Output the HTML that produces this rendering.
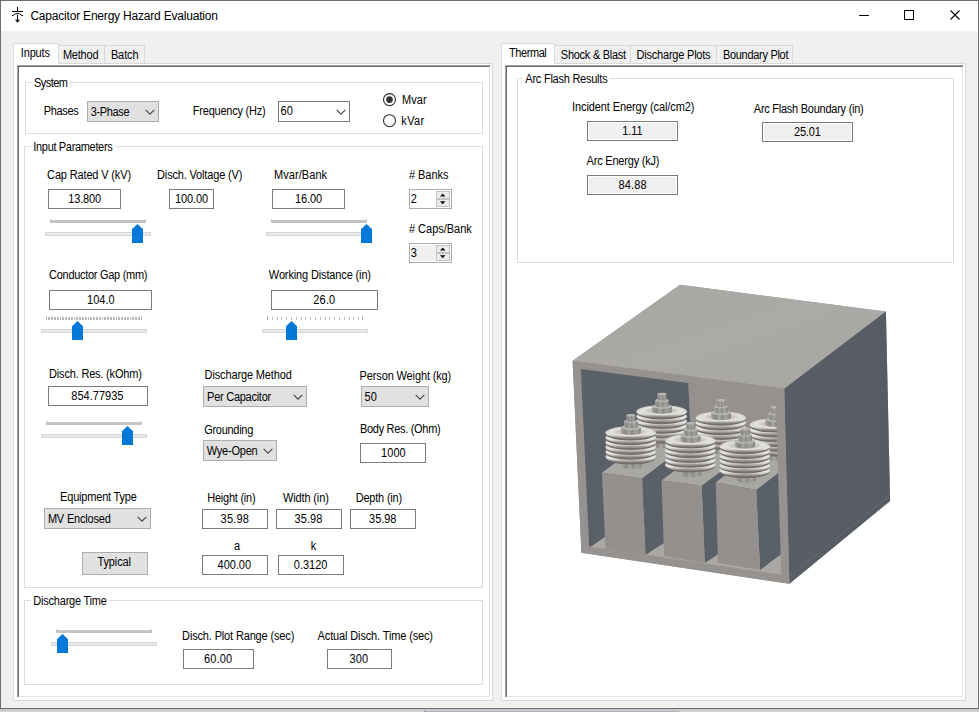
<!DOCTYPE html>
<html lang="en"><head><meta charset="utf-8"><title>Capacitor Energy Hazard Evaluation</title>
<style>
html,body{margin:0;padding:0;}
body{width:979px;height:712px;overflow:hidden;background:#f0f0f0;position:relative;font:11px/14px "Liberation Sans", Arial, sans-serif;color:#000;}
.abs{position:absolute;display:block}
.t{position:absolute;white-space:pre;height:14px;transform:scaleY(1.15);transform-origin:0 10.81px;}
#win{position:absolute;left:0;top:0;width:977px;height:707px;border:1px solid #6e6e6e;border-right-color:#707070;background:#f0f0f0;}
#title{position:absolute;left:1px;top:1px;width:977px;height:30px;background:#fff;}
#ttext{position:absolute;left:30.4px;top:8.1px;font:12px/16px "Liberation Sans", Arial, sans-serif;letter-spacing:-0.2px;white-space:pre;}
#below{position:absolute;left:0;top:709px;width:979px;height:3px;background:linear-gradient(#c2c2c2,#d4d4d4);}
#below2{position:absolute;left:424px;top:711px;width:255px;height:1px;background:#a7b3c1;border-left:1px solid #808b97;box-sizing:border-box}
.tabc{position:absolute;background:#fff;border:1px solid #d9d9d9;box-sizing:border-box}
.page{position:absolute;box-sizing:border-box;background:#fff;border-style:solid;border-width:1px;border-color:#a0a0a0 #fff #fff #a0a0a0;}
.page>i{position:absolute;left:0;top:0;right:0;bottom:0;border-style:solid;border-width:1px;border-color:#696969 #e3e3e3 #e3e3e3 #696969;display:block}
.tab{position:absolute;box-sizing:border-box;border:1px solid #d9d9d9;border-bottom:none;background:#f0f0f0;}
.tab.sel{background:#fff;}
.gb{position:absolute;border:1px solid #dcdcdc;}
.gcap{position:absolute;background:#fff;}
.tb{position:absolute;box-sizing:border-box;border:1px solid #7a7a7a;background:#fff;}
.tb.ro{background:#f0f0f0;box-shadow:inset 0 0 0 1px #fff;}
.tb.nud{border-color:#ababab;}
.tb.nud.dis{background:#f0f0f0;box-shadow:inset 0 0 0 1px #fff;}
.cb{position:absolute;box-sizing:border-box;border:1px solid #adadad;background:#e1e1e1;}
.cbw{position:absolute;box-sizing:border-box;border:1px solid #7a7a7a;background:#fff;}
.btn{position:absolute;box-sizing:border-box;border:1px solid #adadad;background:#e1e1e1;}
.spin{position:absolute;border:1px solid #c3c3c3;background:#ececec;}
.track{position:absolute;border:1px solid #d6d6d6;background:#e7eaea;}
</style></head><body>
<div id="win"></div>
<div id="title"></div>
<svg class="abs" style="left:10px;top:5px" width="16" height="20" viewBox="0 0 16 20"><g fill="none" stroke="#000" stroke-width="1"><path d="M7.5 2 V6.5 M2 6.5 H13 M2 10.5 H3.5 M3.5 10 Q7.5 6.8 11.5 10 M11.5 10.5 H13 M7.5 9.6 V16"/></g><path d="M5 14.8 H10 L7.5 17.8 Z" fill="#000"/></svg>
<div id="ttext">Capacitor Energy Hazard Evaluation</div>
<svg class="abs" style="left:855px;top:5px" width="110" height="20" viewBox="0 0 110 20"><g fill="none" stroke="#000" stroke-width="1"><path d="M4 10.5 H14"/><rect x="49.5" y="5.5" width="9" height="9"/><path d="M95.5 5.5 L104.5 14.5 M104.5 5.5 L95.5 14.5" stroke-width="1.1"/></g></svg>
<div id="below"></div><div id="below2"></div>

<!-- left tab control -->
<div class="tabc" style="left:13px;top:63px;width:480px;height:638px"></div>
<div class="tab" style="left:57px;top:45px;width:48px;height:18px"></div>
<div class="tab" style="left:104px;top:45px;width:41px;height:18px"></div>
<div class="tab sel" style="left:13px;top:43px;width:46px;height:21px"></div>
<div class="page" style="left:17px;top:65px;width:474px;height:633px"><i></i></div>
<!-- right tab control -->
<div class="tabc" style="left:501px;top:63px;width:465px;height:638px"></div>
<div class="tab" style="left:551px;top:45px;width:80px;height:18px"></div>
<div class="tab" style="left:630px;top:45px;width:87px;height:18px"></div>
<div class="tab" style="left:716px;top:45px;width:77px;height:18px"></div>
<div class="tab sel" style="left:501px;top:43px;width:54px;height:21px"></div>
<div class="page" style="left:505px;top:65px;width:459px;height:633px"><i></i></div>

<div class="gb" style="left:25px;top:82px;width:456px;height:50px"></div>
<div class="gcap" style="left:32.00px;top:80px;width:37.50px;height:5px"></div>
<div class="t" style="left:34.10px;top:75.99px;letter-spacing:-0.565px;">System</div>
<div class="gb" style="left:24px;top:146px;width:457px;height:440px"></div>
<div class="gcap" style="left:31.25px;top:144px;width:83.25px;height:5px"></div>
<div class="t" style="left:33.35px;top:139.99px;letter-spacing:-0.333px;">Input Parameters</div>
<div class="gb" style="left:24px;top:600px;width:457px;height:83px"></div>
<div class="gcap" style="left:31.25px;top:598px;width:77.50px;height:5px"></div>
<div class="t" style="left:33.35px;top:593.99px;letter-spacing:-0.223px;">Discharge Time</div>
<div class="gb" style="left:517px;top:78px;width:435px;height:183px"></div>
<div class="gcap" style="left:523.25px;top:76px;width:86.25px;height:5px"></div>
<div class="t" style="left:525.35px;top:71.99px;letter-spacing:-0.244px;">Arc Flash Results</div>
<div class="tb" style="left:48px;top:189px;width:73px;height:20px"></div>
<div class="tb" style="left:169px;top:189px;width:45px;height:20px"></div>
<div class="tb" style="left:272px;top:189px;width:73px;height:20px"></div>
<div class="tb" style="left:49px;top:290px;width:103px;height:20px"></div>
<div class="tb" style="left:271px;top:290px;width:107px;height:20px"></div>
<div class="tb" style="left:48px;top:386px;width:100px;height:20px"></div>
<div class="tb" style="left:360px;top:443px;width:66px;height:20px"></div>
<div class="tb" style="left:202px;top:509px;width:66px;height:20px"></div>
<div class="tb" style="left:276px;top:509px;width:66px;height:20px"></div>
<div class="tb" style="left:350px;top:509px;width:66px;height:20px"></div>
<div class="tb" style="left:202px;top:555px;width:66px;height:20px"></div>
<div class="tb" style="left:278px;top:555px;width:66px;height:20px"></div>
<div class="tb" style="left:183px;top:649px;width:71px;height:20px"></div>
<div class="tb" style="left:327px;top:649px;width:65px;height:20px"></div>
<div class="tb ro" style="left:587px;top:121px;width:91px;height:20px"></div>
<div class="tb ro" style="left:762px;top:122px;width:91px;height:20px"></div>
<div class="tb ro" style="left:587px;top:175px;width:91px;height:20px"></div>
<div class="cb" style="left:87px;top:101px;width:72px;height:21px"></div>
<svg class="abs" style="left:143.5px;top:108.0px" width="12" height="8" viewBox="0 0 12 8"><path d="M1.7 1.9 L6 6.2 L10.3 1.9" fill="none" stroke="#424242" stroke-width="1.1"/></svg>
<div class="cb" style="left:203px;top:386px;width:104px;height:21px"></div>
<svg class="abs" style="left:291.5px;top:393.0px" width="12" height="8" viewBox="0 0 12 8"><path d="M1.7 1.9 L6 6.2 L10.3 1.9" fill="none" stroke="#424242" stroke-width="1.1"/></svg>
<div class="cb" style="left:361px;top:386px;width:68px;height:21px"></div>
<svg class="abs" style="left:413.5px;top:393.0px" width="12" height="8" viewBox="0 0 12 8"><path d="M1.7 1.9 L6 6.2 L10.3 1.9" fill="none" stroke="#424242" stroke-width="1.1"/></svg>
<div class="cb" style="left:203px;top:440px;width:74px;height:21px"></div>
<svg class="abs" style="left:261.5px;top:447.0px" width="12" height="8" viewBox="0 0 12 8"><path d="M1.7 1.9 L6 6.2 L10.3 1.9" fill="none" stroke="#424242" stroke-width="1.1"/></svg>
<div class="cb" style="left:44px;top:508px;width:107px;height:21px"></div>
<svg class="abs" style="left:135.5px;top:515.0px" width="12" height="8" viewBox="0 0 12 8"><path d="M1.7 1.9 L6 6.2 L10.3 1.9" fill="none" stroke="#424242" stroke-width="1.1"/></svg>
<div class="cbw" style="left:278px;top:101px;width:72px;height:21px"></div>
<svg class="abs" style="left:334.5px;top:108px" width="12" height="8" viewBox="0 0 12 8"><path d="M1.7 1.9 L6 6.2 L10.3 1.9" fill="none" stroke="#424242" stroke-width="1.1"/></svg>
<div class="btn" style="left:82px;top:552px;width:66px;height:23px"></div>
<div class="tb nud" style="left:409px;top:189px;width:43px;height:20px"></div><div class="spin" style="left:436px;top:191px;width:12px;height:6px"></div><div class="spin" style="left:436px;top:199px;width:12px;height:6px"></div><svg class="abs" style="left:436px;top:191px" width="14" height="17" viewBox="0 0 14 17"><path d="M4 5.6 L6.7 2.6 L9.4 5.6 Z M4 10.3 L6.7 13.3 L9.4 10.3 Z" fill="#000"/></svg>
<div class="tb nud dis" style="left:409px;top:243px;width:43px;height:20px"></div><div class="spin" style="left:436px;top:245px;width:12px;height:6px"></div><div class="spin" style="left:436px;top:253px;width:12px;height:6px"></div><svg class="abs" style="left:436px;top:245px" width="14" height="17" viewBox="0 0 14 17"><path d="M4 5.6 L6.7 2.6 L9.4 5.6 Z M4 10.3 L6.7 13.3 L9.4 10.3 Z" fill="#000"/></svg>
<!-- radios -->
<svg class="abs" style="left:382px;top:92px" width="15" height="37" viewBox="0 0 15 37"><circle cx="7.5" cy="7.55" r="6" fill="#fff" stroke="#333" stroke-width="1.15"/><circle cx="7.5" cy="7.55" r="3.35" fill="#333"/><circle cx="7.5" cy="28.7" r="6" fill="#fff" stroke="#333" stroke-width="1.15"/></svg>
<div class="abs" style="left:50px;top:220px;width:96px;height:3px;background:#c4c4c4"></div><div class="abs" style="left:50px;top:219px;width:1px;height:1px;background:#c4c4c4"></div><div class="abs" style="left:145px;top:219px;width:1px;height:1px;background:#c4c4c4"></div><div class="track" style="left:45px;top:232px;width:104px;height:2px"></div><svg class="abs" style="left:132px;top:224px" width="11" height="19" viewBox="0 0 11 19"><path d="M5.5 0 L11 5.2 L11 19 L0 19 L0 5.2 Z" fill="#0078d7"/></svg>
<div class="abs" style="left:271px;top:220px;width:96px;height:3px;background:#c4c4c4"></div><div class="abs" style="left:271px;top:219px;width:1px;height:1px;background:#c4c4c4"></div><div class="abs" style="left:366px;top:219px;width:1px;height:1px;background:#c4c4c4"></div><div class="track" style="left:266px;top:232px;width:104px;height:2px"></div><svg class="abs" style="left:361px;top:224px" width="11" height="19" viewBox="0 0 11 19"><path d="M5.5 0 L11 5.2 L11 19 L0 19 L0 5.2 Z" fill="#0078d7"/></svg>
<svg class="abs" style="left:46px;top:316px" width="99" height="4" shape-rendering="crispEdges"><rect x="0" y="0" width="1" height="4" fill="#b2b2b2"/><rect x="2" y="1" width="2" height="3" fill="#b9b9b9"/><rect x="5" y="1" width="2" height="3" fill="#b9b9b9"/><rect x="8" y="1" width="2" height="3" fill="#b9b9b9"/><rect x="11" y="1" width="2" height="3" fill="#b9b9b9"/><rect x="14" y="1" width="1" height="3" fill="#b9b9b9"/><rect x="16" y="1" width="2" height="3" fill="#b9b9b9"/><rect x="19" y="1" width="2" height="3" fill="#b9b9b9"/><rect x="22" y="1" width="2" height="3" fill="#b9b9b9"/><rect x="25" y="1" width="2" height="3" fill="#b9b9b9"/><rect x="28" y="1" width="1" height="3" fill="#b9b9b9"/><rect x="30" y="1" width="2" height="3" fill="#b9b9b9"/><rect x="33" y="1" width="2" height="3" fill="#b9b9b9"/><rect x="36" y="1" width="2" height="3" fill="#b9b9b9"/><rect x="39" y="1" width="2" height="3" fill="#b9b9b9"/><rect x="42" y="1" width="1" height="3" fill="#b9b9b9"/><rect x="44" y="1" width="2" height="3" fill="#b9b9b9"/><rect x="47" y="1" width="2" height="3" fill="#b9b9b9"/><rect x="50" y="1" width="2" height="3" fill="#b9b9b9"/><rect x="53" y="1" width="2" height="3" fill="#b9b9b9"/><rect x="56" y="1" width="1" height="3" fill="#b9b9b9"/><rect x="58" y="1" width="2" height="3" fill="#b9b9b9"/><rect x="61" y="1" width="2" height="3" fill="#b9b9b9"/><rect x="64" y="1" width="2" height="3" fill="#b9b9b9"/><rect x="67" y="1" width="2" height="3" fill="#b9b9b9"/><rect x="70" y="1" width="1" height="3" fill="#b9b9b9"/><rect x="72" y="1" width="2" height="3" fill="#b9b9b9"/><rect x="75" y="1" width="2" height="3" fill="#b9b9b9"/><rect x="78" y="1" width="2" height="3" fill="#b9b9b9"/><rect x="81" y="1" width="2" height="3" fill="#b9b9b9"/><rect x="84" y="1" width="1" height="3" fill="#b9b9b9"/><rect x="86" y="1" width="2" height="3" fill="#b9b9b9"/><rect x="89" y="1" width="2" height="3" fill="#b9b9b9"/><rect x="92" y="1" width="2" height="3" fill="#b9b9b9"/><rect x="95" y="0" width="1" height="4" fill="#b2b2b2"/></svg><div class="track" style="left:41px;top:329px;width:104px;height:2px"></div><svg class="abs" style="left:72px;top:321px" width="11" height="19" viewBox="0 0 11 19"><path d="M5.5 0 L11 5.2 L11 19 L0 19 L0 5.2 Z" fill="#0078d7"/></svg>
<svg class="abs" style="left:267px;top:316px" width="98" height="4" shape-rendering="crispEdges"><rect x="0" y="0" width="1" height="4" fill="#b2b2b2"/><rect x="5" y="1" width="1" height="3" fill="#b9b9b9"/><rect x="10" y="1" width="1" height="3" fill="#b9b9b9"/><rect x="14" y="1" width="1" height="3" fill="#b9b9b9"/><rect x="19" y="1" width="1" height="3" fill="#b9b9b9"/><rect x="24" y="1" width="1" height="3" fill="#b9b9b9"/><rect x="29" y="1" width="1" height="3" fill="#b9b9b9"/><rect x="34" y="1" width="1" height="3" fill="#b9b9b9"/><rect x="38" y="1" width="1" height="3" fill="#b9b9b9"/><rect x="43" y="1" width="1" height="3" fill="#b9b9b9"/><rect x="48" y="1" width="1" height="3" fill="#b9b9b9"/><rect x="53" y="1" width="1" height="3" fill="#b9b9b9"/><rect x="58" y="1" width="1" height="3" fill="#b9b9b9"/><rect x="62" y="1" width="1" height="3" fill="#b9b9b9"/><rect x="67" y="1" width="1" height="3" fill="#b9b9b9"/><rect x="72" y="1" width="1" height="3" fill="#b9b9b9"/><rect x="77" y="1" width="1" height="3" fill="#b9b9b9"/><rect x="82" y="1" width="1" height="3" fill="#b9b9b9"/><rect x="86" y="1" width="1" height="3" fill="#b9b9b9"/><rect x="91" y="1" width="1" height="3" fill="#b9b9b9"/><rect x="95" y="0" width="1" height="4" fill="#b2b2b2"/></svg><div class="track" style="left:262px;top:329px;width:104px;height:2px"></div><svg class="abs" style="left:286px;top:321px" width="11" height="19" viewBox="0 0 11 19"><path d="M5.5 0 L11 5.2 L11 19 L0 19 L0 5.2 Z" fill="#0078d7"/></svg>
<div class="abs" style="left:46px;top:422px;width:96px;height:3px;background:#c4c4c4"></div><div class="abs" style="left:46px;top:421px;width:1px;height:1px;background:#c4c4c4"></div><div class="abs" style="left:141px;top:421px;width:1px;height:1px;background:#c4c4c4"></div><div class="track" style="left:41px;top:434px;width:104px;height:2px"></div><svg class="abs" style="left:122px;top:426px" width="11" height="19" viewBox="0 0 11 19"><path d="M5.5 0 L11 5.2 L11 19 L0 19 L0 5.2 Z" fill="#0078d7"/></svg>
<div class="abs" style="left:56px;top:630px;width:96px;height:3px;background:#c4c4c4"></div><div class="abs" style="left:56px;top:629px;width:1px;height:1px;background:#c4c4c4"></div><div class="abs" style="left:151px;top:629px;width:1px;height:1px;background:#c4c4c4"></div><div class="track" style="left:51px;top:642px;width:104px;height:2px"></div><svg class="abs" style="left:57px;top:634px" width="11" height="19" viewBox="0 0 11 19"><path d="M5.5 0 L11 5.2 L11 19 L0 19 L0 5.2 Z" fill="#0078d7"/></svg>
<svg class="abs" style="left:560px;top:275px" width="340" height="320" viewBox="560 275 340 320">
<defs>
<linearGradient id="gd" x1="0" y1="0" x2="0" y2="1"><stop offset="0" stop-color="#cbc9c6"/><stop offset="0.42" stop-color="#cecccc"/><stop offset="0.6" stop-color="#e9e8e6"/><stop offset="0.74" stop-color="#d0cecb"/><stop offset="0.86" stop-color="#a19e9b"/><stop offset="1" stop-color="#7b7875"/></linearGradient>
<linearGradient id="gc" x1="0" y1="0" x2="1" y2="0"><stop offset="0" stop-color="#a3a19e"/><stop offset="0.22" stop-color="#8a8885"/><stop offset="0.4" stop-color="#a9a7a4"/><stop offset="0.55" stop-color="#8d8b88"/><stop offset="0.75" stop-color="#a5a3a0"/><stop offset="1" stop-color="#858380"/></linearGradient>
<radialGradient id="gt" cx="0.5" cy="0.5" r="0.5"><stop offset="0" stop-color="#b5b3b0"/><stop offset="0.5" stop-color="#c6c4c1"/><stop offset="0.85" stop-color="#e5e4e1"/><stop offset="1" stop-color="#d6d4d1"/></radialGradient>
<linearGradient id="gtop" x1="0" y1="0" x2="1" y2="1"><stop offset="0" stop-color="#a8a6a2"/><stop offset="0.5" stop-color="#abaaa6"/><stop offset="1" stop-color="#a7a5a1"/></linearGradient>
<linearGradient id="gright" x1="0" y1="0" x2="1" y2="0"><stop offset="0" stop-color="#595e66"/><stop offset="1" stop-color="#575c64"/></linearGradient>
<clipPath id="hole"><polygon points="577.5,365.5 779,392 785,579 586,550.5"/></clipPath>
</defs>
<polygon points="572.6,360.7 680.1,284.8 885.9,311.6 890.1,500.9 789.4,583.8 581.4,552.8" fill="#96928f"/>
<polygon points="572.6,360.7 680.1,284.8 885.9,311.6 784.2,388.7" fill="url(#gtop)"/>
<polygon points="784.2,388.7 885.9,311.6 890.1,500.9 789.4,583.8" fill="url(#gright)"/>
<path d="M790.6 575.6 L889.4 495.3" stroke="#6d737a" stroke-width="0.6" fill="none"/>
<g clip-path="url(#hole)">
<polygon points="572.6,360.7 784.2,388.7 789.4,583.8 581.4,552.8" fill="#aaa8a4"/>
<polygon points="688.2,380.5 778.0,392.5 783.0,500.0 692.5,476.0" fill="#96918e"/>
<polygon points="578.5,366.5 688.2,380.5 692.5,476.0 587.5,549.0" fill="#5a6067"/>
<polygon points="602.0,472.8 642.3,478.5 694.3,439.5 654.0,433.8" fill="#a9a7a3"/><polygon points="642.3,478.5 694.3,439.5 697.4,521.3 645.4,555.0" fill="#5a6067"/><polygon points="602.0,472.8 642.3,478.5 645.4,555.0 605.5,548.8" fill="#94908d"/>
<path d="M653.0 439.2 L653.0 445.5 A9.9 2.4 0 0 0 672.8 445.5 L672.8 439.2 Z" fill="url(#gc)"/><ellipse cx="662.9" cy="439.2" rx="9.9" ry="2.4" fill="#b9b7b4"/><ellipse cx="661.7" cy="437.1" rx="24.7" ry="6.3" fill="#716e6b"/><ellipse cx="661.7" cy="435.5" rx="25.3" ry="6.3" fill="url(#gd)"/><ellipse cx="661.7" cy="432.3" rx="24.7" ry="6.3" fill="#716e6b"/><ellipse cx="661.7" cy="430.7" rx="25.3" ry="6.3" fill="url(#gd)"/><ellipse cx="661.7" cy="427.5" rx="24.7" ry="6.3" fill="#716e6b"/><ellipse cx="661.7" cy="425.9" rx="25.3" ry="6.3" fill="url(#gd)"/><ellipse cx="661.7" cy="422.7" rx="24.7" ry="6.3" fill="#716e6b"/><ellipse cx="661.7" cy="421.1" rx="25.3" ry="6.3" fill="url(#gd)"/><ellipse cx="661.7" cy="417.9" rx="24.7" ry="6.3" fill="#716e6b"/><ellipse cx="661.7" cy="416.3" rx="25.3" ry="6.3" fill="url(#gd)"/><ellipse cx="661.7" cy="413.1" rx="24.7" ry="6.3" fill="#716e6b"/><ellipse cx="661.7" cy="411.5" rx="25.3" ry="6.3" fill="url(#gd)"/><ellipse cx="661.7" cy="410.6" rx="23.1" ry="4.7" fill="url(#gt)"/><path d="M652.1 406.4 L652.1 411.4 A9.9 2.4 0 0 0 671.9 411.4 L671.9 406.4 Z" fill="url(#gc)"/><ellipse cx="662.0" cy="406.4" rx="9.9" ry="2.4" fill="#b9b7b4"/><path d="M655.1 400.2 L655.1 405.4 A6.9 1.8 0 0 0 668.9 405.4 L668.9 400.2 Z" fill="url(#gc)"/><ellipse cx="662.0" cy="400.2" rx="6.9" ry="1.8" fill="#b9b7b4"/><path d="M657.5 394.0 L657.5 399.6 A4.5 1.2 0 0 0 666.5 399.6 L666.5 394.0 Z" fill="url(#gc)"/><ellipse cx="662.0" cy="394.0" rx="4.5" ry="1.2" fill="#b9b7b4"/>
<path d="M622.0 460.3 L622.0 466.6 A9.9 2.4 0 0 0 641.8 466.6 L641.8 460.3 Z" fill="url(#gc)"/><ellipse cx="631.9" cy="460.3" rx="9.9" ry="2.4" fill="#b9b7b4"/><ellipse cx="630.7" cy="458.2" rx="24.7" ry="6.3" fill="#716e6b"/><ellipse cx="630.7" cy="456.6" rx="25.3" ry="6.3" fill="url(#gd)"/><ellipse cx="630.7" cy="453.4" rx="24.7" ry="6.3" fill="#716e6b"/><ellipse cx="630.7" cy="451.8" rx="25.3" ry="6.3" fill="url(#gd)"/><ellipse cx="630.7" cy="448.6" rx="24.7" ry="6.3" fill="#716e6b"/><ellipse cx="630.7" cy="447.0" rx="25.3" ry="6.3" fill="url(#gd)"/><ellipse cx="630.7" cy="443.8" rx="24.7" ry="6.3" fill="#716e6b"/><ellipse cx="630.7" cy="442.2" rx="25.3" ry="6.3" fill="url(#gd)"/><ellipse cx="630.7" cy="439.0" rx="24.7" ry="6.3" fill="#716e6b"/><ellipse cx="630.7" cy="437.4" rx="25.3" ry="6.3" fill="url(#gd)"/><ellipse cx="630.7" cy="434.2" rx="24.7" ry="6.3" fill="#716e6b"/><ellipse cx="630.7" cy="432.6" rx="25.3" ry="6.3" fill="url(#gd)"/><ellipse cx="630.7" cy="431.7" rx="23.1" ry="4.7" fill="url(#gt)"/><path d="M621.1 427.5 L621.1 432.5 A9.9 2.4 0 0 0 640.9 432.5 L640.9 427.5 Z" fill="url(#gc)"/><ellipse cx="631.0" cy="427.5" rx="9.9" ry="2.4" fill="#b9b7b4"/><path d="M624.1 421.3 L624.1 426.5 A6.9 1.8 0 0 0 637.9 426.5 L637.9 421.3 Z" fill="url(#gc)"/><ellipse cx="631.0" cy="421.3" rx="6.9" ry="1.8" fill="#b9b7b4"/><path d="M626.5 415.1 L626.5 420.7 A4.5 1.2 0 0 0 635.5 420.7 L635.5 415.1 Z" fill="url(#gc)"/><ellipse cx="631.0" cy="415.1" rx="4.5" ry="1.2" fill="#b9b7b4"/>
<polygon points="661.5,480.5 701.7,485.7 753.7,446.7 713.5,441.5" fill="#a9a7a3"/><polygon points="701.7,485.7 753.7,446.7 756.8,528.5 704.8,563.0" fill="#5a6067"/><polygon points="661.5,480.5 701.7,485.7 704.8,563.0 664.1,556.3" fill="#94908d"/>
<path d="M712.1 445.5 L712.1 451.8 A9.9 2.4 0 0 0 731.9 451.8 L731.9 445.5 Z" fill="url(#gc)"/><ellipse cx="722.0" cy="445.5" rx="9.9" ry="2.4" fill="#b9b7b4"/><ellipse cx="720.8" cy="443.4" rx="24.7" ry="6.3" fill="#716e6b"/><ellipse cx="720.8" cy="441.8" rx="25.3" ry="6.3" fill="url(#gd)"/><ellipse cx="720.8" cy="438.6" rx="24.7" ry="6.3" fill="#716e6b"/><ellipse cx="720.8" cy="437.0" rx="25.3" ry="6.3" fill="url(#gd)"/><ellipse cx="720.8" cy="433.8" rx="24.7" ry="6.3" fill="#716e6b"/><ellipse cx="720.8" cy="432.2" rx="25.3" ry="6.3" fill="url(#gd)"/><ellipse cx="720.8" cy="429.0" rx="24.7" ry="6.3" fill="#716e6b"/><ellipse cx="720.8" cy="427.4" rx="25.3" ry="6.3" fill="url(#gd)"/><ellipse cx="720.8" cy="424.2" rx="24.7" ry="6.3" fill="#716e6b"/><ellipse cx="720.8" cy="422.6" rx="25.3" ry="6.3" fill="url(#gd)"/><ellipse cx="720.8" cy="419.4" rx="24.7" ry="6.3" fill="#716e6b"/><ellipse cx="720.8" cy="417.8" rx="25.3" ry="6.3" fill="url(#gd)"/><ellipse cx="720.8" cy="416.9" rx="23.1" ry="4.7" fill="url(#gt)"/><path d="M711.2 412.7 L711.2 417.7 A9.9 2.4 0 0 0 731.0 417.7 L731.0 412.7 Z" fill="url(#gc)"/><ellipse cx="721.1" cy="412.7" rx="9.9" ry="2.4" fill="#b9b7b4"/><path d="M714.2 406.5 L714.2 411.7 A6.9 1.8 0 0 0 728.0 411.7 L728.0 406.5 Z" fill="url(#gc)"/><ellipse cx="721.1" cy="406.5" rx="6.9" ry="1.8" fill="#b9b7b4"/><path d="M716.6 400.3 L716.6 405.9 A4.5 1.2 0 0 0 725.6 405.9 L725.6 400.3 Z" fill="url(#gc)"/><ellipse cx="721.1" cy="400.3" rx="4.5" ry="1.2" fill="#b9b7b4"/>
<path d="M681.6 468.4 L681.6 474.7 A9.9 2.4 0 0 0 701.4 474.7 L701.4 468.4 Z" fill="url(#gc)"/><ellipse cx="691.5" cy="468.4" rx="9.9" ry="2.4" fill="#b9b7b4"/><ellipse cx="690.3" cy="466.3" rx="24.7" ry="6.3" fill="#716e6b"/><ellipse cx="690.3" cy="464.7" rx="25.3" ry="6.3" fill="url(#gd)"/><ellipse cx="690.3" cy="461.5" rx="24.7" ry="6.3" fill="#716e6b"/><ellipse cx="690.3" cy="459.9" rx="25.3" ry="6.3" fill="url(#gd)"/><ellipse cx="690.3" cy="456.7" rx="24.7" ry="6.3" fill="#716e6b"/><ellipse cx="690.3" cy="455.1" rx="25.3" ry="6.3" fill="url(#gd)"/><ellipse cx="690.3" cy="451.9" rx="24.7" ry="6.3" fill="#716e6b"/><ellipse cx="690.3" cy="450.3" rx="25.3" ry="6.3" fill="url(#gd)"/><ellipse cx="690.3" cy="447.1" rx="24.7" ry="6.3" fill="#716e6b"/><ellipse cx="690.3" cy="445.5" rx="25.3" ry="6.3" fill="url(#gd)"/><ellipse cx="690.3" cy="442.3" rx="24.7" ry="6.3" fill="#716e6b"/><ellipse cx="690.3" cy="440.7" rx="25.3" ry="6.3" fill="url(#gd)"/><ellipse cx="690.3" cy="439.8" rx="23.1" ry="4.7" fill="url(#gt)"/><path d="M680.7 435.6 L680.7 440.6 A9.9 2.4 0 0 0 700.5 440.6 L700.5 435.6 Z" fill="url(#gc)"/><ellipse cx="690.6" cy="435.6" rx="9.9" ry="2.4" fill="#b9b7b4"/><path d="M683.7 429.4 L683.7 434.6 A6.9 1.8 0 0 0 697.5 434.6 L697.5 429.4 Z" fill="url(#gc)"/><ellipse cx="690.6" cy="429.4" rx="6.9" ry="1.8" fill="#b9b7b4"/><path d="M686.1 423.2 L686.1 428.8 A4.5 1.2 0 0 0 695.1 428.8 L695.1 423.2 Z" fill="url(#gc)"/><ellipse cx="690.6" cy="423.2" rx="4.5" ry="1.2" fill="#b9b7b4"/>
<polygon points="715.7,482.4 756.2,490.0 808.2,450.0 767.7,442.4" fill="#a9a7a3"/><polygon points="756.2,490.0 808.2,450.0 812.1,531.0 760.1,570.0" fill="#5a6067"/><polygon points="715.7,482.4 756.2,490.0 760.1,570.0 718.1,563.0" fill="#94908d"/>
<path d="M766.3 452.4 L766.3 458.7 A9.9 2.4 0 0 0 786.1 458.7 L786.1 452.4 Z" fill="url(#gc)"/><ellipse cx="776.2" cy="452.4" rx="9.9" ry="2.4" fill="#b9b7b4"/><ellipse cx="775.0" cy="450.3" rx="24.7" ry="6.3" fill="#716e6b"/><ellipse cx="775.0" cy="448.7" rx="25.3" ry="6.3" fill="url(#gd)"/><ellipse cx="775.0" cy="445.5" rx="24.7" ry="6.3" fill="#716e6b"/><ellipse cx="775.0" cy="443.9" rx="25.3" ry="6.3" fill="url(#gd)"/><ellipse cx="775.0" cy="440.7" rx="24.7" ry="6.3" fill="#716e6b"/><ellipse cx="775.0" cy="439.1" rx="25.3" ry="6.3" fill="url(#gd)"/><ellipse cx="775.0" cy="435.9" rx="24.7" ry="6.3" fill="#716e6b"/><ellipse cx="775.0" cy="434.3" rx="25.3" ry="6.3" fill="url(#gd)"/><ellipse cx="775.0" cy="431.1" rx="24.7" ry="6.3" fill="#716e6b"/><ellipse cx="775.0" cy="429.5" rx="25.3" ry="6.3" fill="url(#gd)"/><ellipse cx="775.0" cy="426.3" rx="24.7" ry="6.3" fill="#716e6b"/><ellipse cx="775.0" cy="424.7" rx="25.3" ry="6.3" fill="url(#gd)"/><ellipse cx="775.0" cy="423.8" rx="23.1" ry="4.7" fill="url(#gt)"/><path d="M765.4 419.6 L765.4 424.6 A9.9 2.4 0 0 0 785.2 424.6 L785.2 419.6 Z" fill="url(#gc)"/><ellipse cx="775.3" cy="419.6" rx="9.9" ry="2.4" fill="#b9b7b4"/><path d="M768.4 413.4 L768.4 418.6 A6.9 1.8 0 0 0 782.2 418.6 L782.2 413.4 Z" fill="url(#gc)"/><ellipse cx="775.3" cy="413.4" rx="6.9" ry="1.8" fill="#b9b7b4"/><path d="M770.8 407.2 L770.8 412.8 A4.5 1.2 0 0 0 779.8 412.8 L779.8 407.2 Z" fill="url(#gc)"/><ellipse cx="775.3" cy="407.2" rx="4.5" ry="1.2" fill="#b9b7b4"/>
<path d="M736.1 474.0 L736.1 480.3 A9.9 2.4 0 0 0 755.9 480.3 L755.9 474.0 Z" fill="url(#gc)"/><ellipse cx="746.0" cy="474.0" rx="9.9" ry="2.4" fill="#b9b7b4"/><ellipse cx="744.8" cy="471.9" rx="24.7" ry="6.3" fill="#716e6b"/><ellipse cx="744.8" cy="470.3" rx="25.3" ry="6.3" fill="url(#gd)"/><ellipse cx="744.8" cy="467.1" rx="24.7" ry="6.3" fill="#716e6b"/><ellipse cx="744.8" cy="465.5" rx="25.3" ry="6.3" fill="url(#gd)"/><ellipse cx="744.8" cy="462.3" rx="24.7" ry="6.3" fill="#716e6b"/><ellipse cx="744.8" cy="460.7" rx="25.3" ry="6.3" fill="url(#gd)"/><ellipse cx="744.8" cy="457.5" rx="24.7" ry="6.3" fill="#716e6b"/><ellipse cx="744.8" cy="455.9" rx="25.3" ry="6.3" fill="url(#gd)"/><ellipse cx="744.8" cy="452.7" rx="24.7" ry="6.3" fill="#716e6b"/><ellipse cx="744.8" cy="451.1" rx="25.3" ry="6.3" fill="url(#gd)"/><ellipse cx="744.8" cy="447.9" rx="24.7" ry="6.3" fill="#716e6b"/><ellipse cx="744.8" cy="446.3" rx="25.3" ry="6.3" fill="url(#gd)"/><ellipse cx="744.8" cy="445.4" rx="23.1" ry="4.7" fill="url(#gt)"/><path d="M735.2 441.2 L735.2 446.2 A9.9 2.4 0 0 0 755.0 446.2 L755.0 441.2 Z" fill="url(#gc)"/><ellipse cx="745.1" cy="441.2" rx="9.9" ry="2.4" fill="#b9b7b4"/><path d="M738.2 435.0 L738.2 440.2 A6.9 1.8 0 0 0 752.0 440.2 L752.0 435.0 Z" fill="url(#gc)"/><ellipse cx="745.1" cy="435.0" rx="6.9" ry="1.8" fill="#b9b7b4"/><path d="M740.6 428.8 L740.6 434.4 A4.5 1.2 0 0 0 749.6 434.4 L749.6 428.8 Z" fill="url(#gc)"/><ellipse cx="745.1" cy="428.8" rx="4.5" ry="1.2" fill="#b9b7b4"/>
</g>
<path fill-rule="evenodd" fill="#96928f" d="M572.6,360.7 L784.2,388.7 L789.4,583.8 L581.4,552.8 Z M580.8,368.9 L775.6,394.5 L781.3,574.6 L589.2,546.6 Z"/>
</svg>
<div class="t" style="left:20.80px;top:45.99px;letter-spacing:-0.161px;">Inputs</div>
<div class="t" style="left:62.90px;top:47.99px;letter-spacing:-0.201px;">Method</div>
<div class="t" style="left:110.90px;top:47.99px;letter-spacing:-0.108px;">Batch</div>
<div class="t" style="left:509.10px;top:45.99px;letter-spacing:-0.449px;">Thermal</div>
<div class="t" style="left:560.85px;top:47.99px;letter-spacing:-0.264px;">Shock &amp; Blast</div>
<div class="t" style="left:636.60px;top:47.99px;letter-spacing:-0.216px;">Discharge Plots</div>
<div class="t" style="left:722.90px;top:47.99px;letter-spacing:-0.293px;">Boundary Plot</div>
<div class="t" style="left:43.85px;top:103.99px;letter-spacing:-0.359px;">Phases</div>
<div class="t" style="left:192.85px;top:103.99px;letter-spacing:-0.232px;">Frequency (Hz)</div>
<div class="t" style="left:402.10px;top:92.99px;letter-spacing:0.024px;">Mvar</div>
<div class="t" style="left:401.30px;top:113.99px;letter-spacing:0.372px;">kVar</div>
<div class="t" style="left:47.10px;top:167.99px;letter-spacing:-0.150px;">Cap Rated V (kV)</div>
<div class="t" style="left:157.10px;top:167.99px;letter-spacing:-0.166px;">Disch. Voltage (V)</div>
<div class="t" style="left:274.10px;top:167.99px;letter-spacing:0.052px;">Mvar/Bank</div>
<div class="t" style="left:409.00px;top:167.99px;letter-spacing:-0.050px;"># Banks</div>
<div class="t" style="left:409.00px;top:221.99px;letter-spacing:-0.026px;"># Caps/Bank</div>
<div class="t" style="left:49.10px;top:267.99px;letter-spacing:-0.292px;">Conductor Gap (mm)</div>
<div class="t" style="left:268.85px;top:267.99px;letter-spacing:-0.138px;">Working Distance (in)</div>
<div class="t" style="left:49.10px;top:366.99px;letter-spacing:-0.190px;">Disch. Res. (kOhm)</div>
<div class="t" style="left:204.60px;top:367.99px;letter-spacing:-0.139px;">Discharge Method</div>
<div class="t" style="left:359.60px;top:368.99px;letter-spacing:-0.134px;">Person Weight (kg)</div>
<div class="t" style="left:204.20px;top:422.99px;letter-spacing:-0.286px;">Grounding</div>
<div class="t" style="left:360.00px;top:421.99px;letter-spacing:-0.305px;">Body Res. (Ohm)</div>
<div class="t" style="left:60.10px;top:489.99px;letter-spacing:-0.193px;">Equipment Type</div>
<div class="t" style="left:207.20px;top:490.99px;letter-spacing:-0.232px;">Height (in)</div>
<div class="t" style="left:282.90px;top:490.99px;letter-spacing:-0.126px;">Width (in)</div>
<div class="t" style="left:355.70px;top:490.99px;letter-spacing:-0.200px;">Depth (in)</div>
<div class="t" style="left:234.00px;top:538.99px;">a</div>
<div class="t" style="left:310.70px;top:538.99px;">k</div>
<div class="t" style="left:182.10px;top:628.99px;letter-spacing:-0.152px;">Disch. Plot Range (sec)</div>
<div class="t" style="left:317.60px;top:628.99px;letter-spacing:-0.137px;">Actual Disch. Time (sec)</div>
<div class="t" style="left:572.00px;top:99.99px;letter-spacing:-0.093px;">Incident Energy (cal/cm2)</div>
<div class="t" style="left:753.80px;top:101.99px;letter-spacing:-0.254px;">Arc Flash Boundary (in)</div>
<div class="t" style="left:586.60px;top:153.99px;letter-spacing:-0.206px;">Arc Energy (kJ)</div>
<div class="t" style="left:68.35px;top:191.99px;letter-spacing:-0.184px;">13.800</div>
<div class="t" style="left:175.10px;top:191.99px;letter-spacing:-0.143px;">100.00</div>
<div class="t" style="left:294.90px;top:191.99px;letter-spacing:-0.046px;">16.00</div>
<div class="t" style="left:410.85px;top:191.99px;">2</div>
<div class="t" style="left:410.85px;top:245.99px;">3</div>
<div class="t" style="left:87.10px;top:292.99px;letter-spacing:0.004px;">104.0</div>
<div class="t" style="left:313.35px;top:292.99px;letter-spacing:0.157px;">26.0</div>
<div class="t" style="left:71.35px;top:388.99px;letter-spacing:0.006px;">854.77935</div>
<div class="t" style="left:207.10px;top:389.99px;letter-spacing:-0.267px;">Per Capacitor</div>
<div class="t" style="left:364.60px;top:389.99px;letter-spacing:0.150px;">50</div>
<div class="t" style="left:206.70px;top:443.99px;letter-spacing:-0.211px;">Wye-Open</div>
<div class="t" style="left:381.00px;top:445.99px;letter-spacing:0.079px;">1000</div>
<div class="t" style="left:47.90px;top:511.99px;letter-spacing:-0.183px;">MV Enclosed</div>
<div class="t" style="left:220.60px;top:511.99px;letter-spacing:0.214px;">35.98</div>
<div class="t" style="left:294.60px;top:511.99px;letter-spacing:0.054px;">35.98</div>
<div class="t" style="left:369.10px;top:511.99px;letter-spacing:-0.046px;">35.98</div>
<div class="t" style="left:97.50px;top:554.99px;letter-spacing:-0.121px;">Typical</div>
<div class="t" style="left:217.60px;top:557.99px;letter-spacing:-0.043px;">400.00</div>
<div class="t" style="left:293.80px;top:557.99px;letter-spacing:-0.009px;">0.3120</div>
<div class="t" style="left:204.10px;top:651.99px;letter-spacing:0.154px;">60.00</div>
<div class="t" style="left:349.60px;top:651.99px;letter-spacing:0.147px;">300</div>
<div class="t" style="left:622.20px;top:123.99px;letter-spacing:-0.023px;">1.11</div>
<div class="t" style="left:793.90px;top:124.99px;letter-spacing:-0.126px;">25.01</div>
<div class="t" style="left:618.60px;top:177.99px;letter-spacing:0.114px;">84.88</div>
<div class="t" style="left:90.85px;top:104.99px;letter-spacing:-0.383px;">3-Phase</div>
<div class="t" style="left:280.50px;top:103.99px;letter-spacing:0.025px;">60</div>
</body></html>
